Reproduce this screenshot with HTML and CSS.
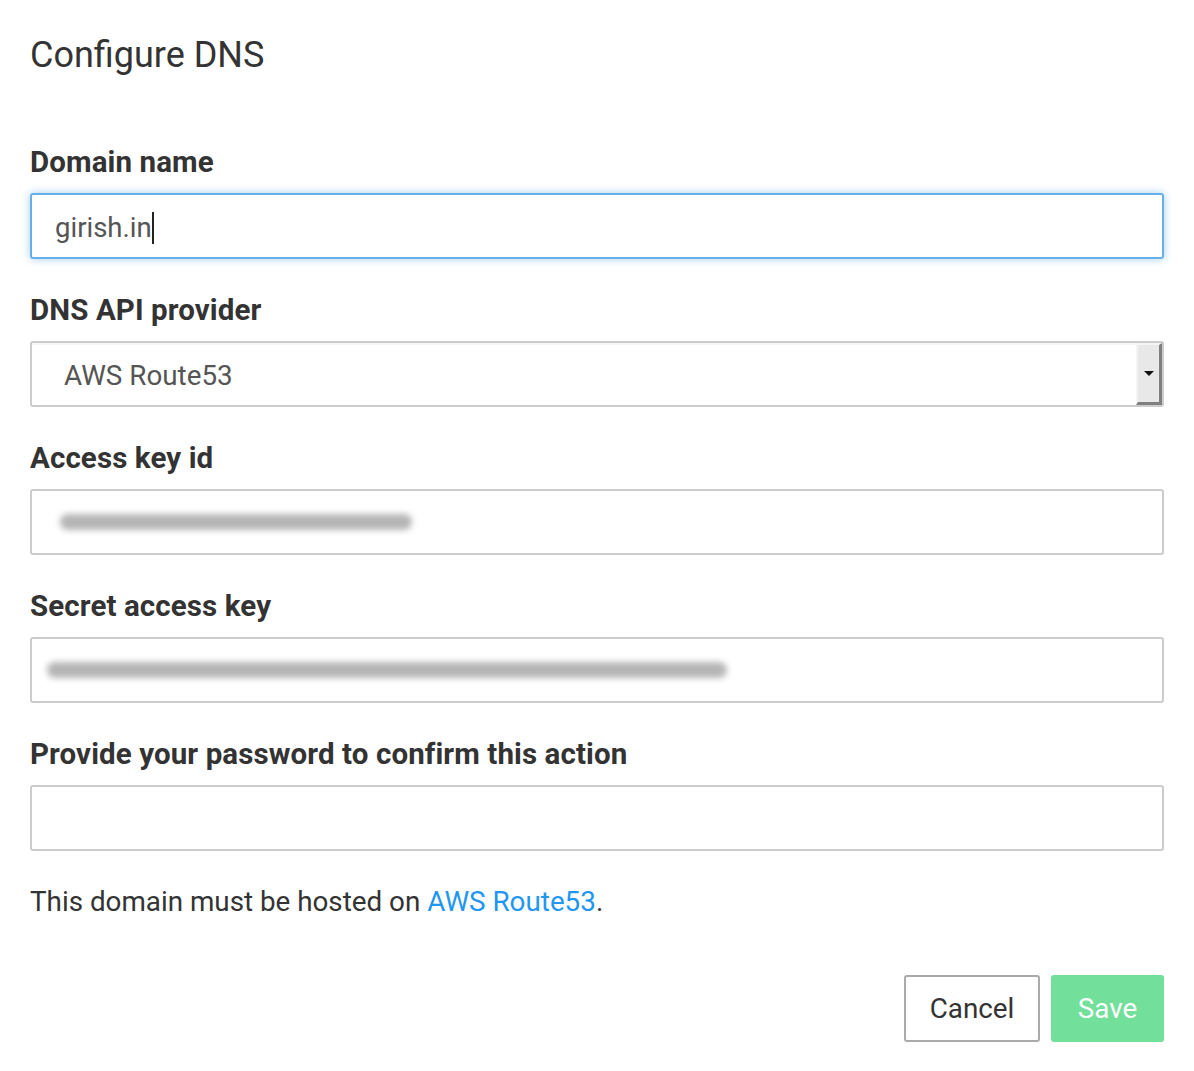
FILE: index.html
```html
<!DOCTYPE html>
<html>
<head>
<meta charset="utf-8">
<link rel="stylesheet" href="styles.css">
</head>
<body>
<div class="dialog">
  <h1 class="title">Configure DNS</h1>
  <div class="group">
    <div class="label">Domain name</div>
    <div class="input focused"><span class="value">girish.in</span><span class="caret"></span></div>
  </div>
  <div class="group">
    <div class="label">DNS API provider</div>
    <div class="select">
      <span class="select-text">AWS Route53</span>
      <span class="select-btn"><span class="arrow"></span></span>
    </div>
  </div>
  <div class="group">
    <div class="label">Access key id</div>
    <div class="input"><span class="blur blur-short"></span></div>
  </div>
  <div class="group">
    <div class="label">Secret access key</div>
    <div class="input"><span class="blur blur-long"></span></div>
  </div>
  <div class="group">
    <div class="label">Provide your password to confirm this action</div>
    <div class="input"></div>
  </div>
  <p class="help">This domain must be hosted on <a class="link" href="#">AWS Route53</a>.</p>
  <div class="actions">
    <button class="btn btn-cancel">Cancel</button>
    <button class="btn btn-save">Save</button>
  </div>
</div>
</body>
</html>
```
FILE: styles.css
```css
html, body {
  margin: 0;
  padding: 0;
  background: #fff;
}
body {
  font-family: Roboto, "Liberation Sans", Arial, sans-serif;
  color: #333;
}
.dialog {
  width: 1134px;
  padding: 34px 30px 0 30px;
}
.title {
  margin: 0;
  font-size: 36px;
  line-height: 42px;
  font-weight: 400;
  color: #333;
}
.group {
  margin-top: 33px;
}
.group:first-of-type {
  margin-top: 68px;
}
.label {
  font-size: 29.5px;
  letter-spacing: 0.1px;
  line-height: 36px;
  font-weight: 700;
  color: #333;
  margin-bottom: 13px;
}
.input {
  box-sizing: border-box;
  height: 66px;
  border: 2px solid #ccc;
  border-radius: 3px;
  display: flex;
  align-items: center;
  padding-left: 23px;
  overflow: hidden;
  position: relative;
}
.input.focused {
  border-color: #66afe9;
  box-shadow: 0 0 8px rgba(102, 175, 233, 0.6);
}
.value {
  font-size: 27.5px;
  color: #555;
  line-height: 36px;
  padding-top: 3px;
}
.caret {
  display: inline-block;
  width: 2px;
  height: 32px;
  background: #222;
  margin-left: 0;
  margin-top: 3px;
}
.blur {
  display: block;
  height: 16px;
  background: #a8a8a8;
  border-radius: 8px;
  filter: blur(3px);
  opacity: 0.85;
}
.blur-short {
  width: 352px;
  margin-left: 5px;
}
.blur-long {
  width: 680px;
  margin-left: -8px;
}
.select {
  box-sizing: border-box;
  height: 66px;
  border: 2px solid #ccc;
  border-radius: 3px;
  display: flex;
  align-items: stretch;
  background: #fff;
}
.select-text {
  flex: 1;
  display: flex;
  align-items: center;
  padding-left: 32px;
  font-size: 27.8px;
  color: #555;
  border-top: 2px solid #f6f6f6;
}
.select-btn {
  width: 26px;
  box-sizing: border-box;
  background: #e8e8e8;
  border-top: 2px solid #f4f4f4;
  border-left: 2px solid #f4f4f4;
  border-right: 3px solid #7f7f7f;
  border-bottom: 3px solid #7f7f7f;
  display: flex;
  align-items: center;
  justify-content: center;
}
.arrow {
  width: 0;
  height: 0;
  border-left: 5px solid transparent;
  border-right: 5px solid transparent;
  border-top: 5px solid #111;
}
.help {
  margin: 33px 0 0 0;
  font-size: 27.8px;
  line-height: 36px;
  color: #333;
}
.link {
  color: #2196f3;
  text-decoration: none;
}
.actions {
  margin-top: 55px;
  display: flex;
  justify-content: flex-end;
  gap: 11px;
}
.btn {
  box-sizing: border-box;
  height: 67px;
  border-radius: 3px;
  font-family: Roboto, "Liberation Sans", Arial, sans-serif;
  font-size: 27.8px;
  padding: 0;
  cursor: pointer;
}
.btn-cancel {
  width: 136px;
  background: #fff;
  border: 2px solid #aaa;
  color: #333;
}
.btn-save {
  width: 113px;
  background: #72df9a;
  border: 2px solid #72df9a;
  color: #fff;
}
```
